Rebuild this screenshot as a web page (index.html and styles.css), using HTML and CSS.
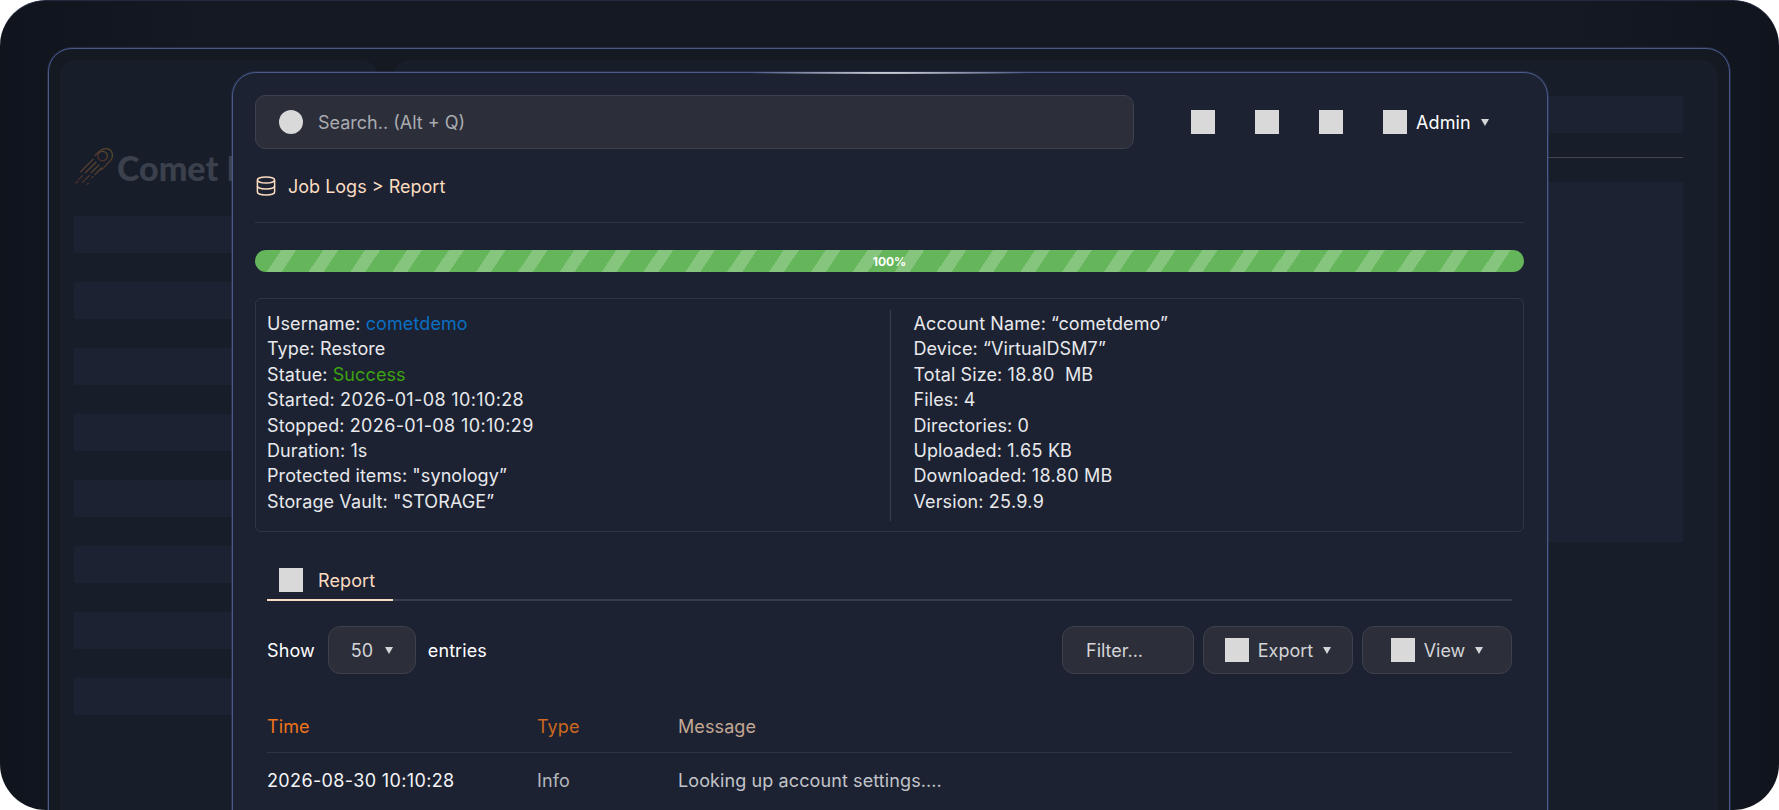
FILE: index.html
```html
<!DOCTYPE html>
<html lang="en">
<head>
<meta charset="utf-8">
<title>Job Logs - Report</title>
<link rel="stylesheet" href="styles.css">
</head>
<body>
<div class="stage">
  <div class="frame">
    <div class="app">
      <aside class="side">
        <div class="brand">
          <svg class="brand-mark" viewBox="0 0 42 42" fill="none" stroke-linecap="round" aria-hidden="true">
            <defs>
              <linearGradient id="cometGrad" x1="1" y1="0" x2="0" y2="1">
                <stop offset="0" stop-color="#5b4d2e"/>
                <stop offset="1" stop-color="#4f2c2b"/>
              </linearGradient>
            </defs>
            <g stroke="url(#cometGrad)" stroke-width="1.3">
              <path d="M22 9 L28 3.500 C31 1 36 1 38.500 3.500 C41 6 41 11 38.500 14 L29 24"/>
              <circle cx="30" cy="9.500" r="5"/>
              <path d="M20 13 L7 26 M23 16 L12 27 M9 30 L5 34 M26 19 L18 27 M16 30 L12 34 M29 22 L22 29 M20 31 L19 32 M2 38 L4 36 M9 37 L11 35 M14 39 L15 38"/>
            </g>
          </svg>
          <span class="brand-name">Comet B</span>
        </div>
        <div class="side-list">
          <div class="side-bar"></div>
          <div class="side-bar"></div>
          <div class="side-bar"></div>
          <div class="side-bar"></div>
          <div class="side-bar"></div>
          <div class="side-bar"></div>
          <div class="side-bar"></div>
          <div class="side-bar"></div>
        </div>
      </aside>
      <main class="back">
        <div class="back-top"></div>
        <div class="back-rule"></div>
        <div class="back-block"></div>
      </main>
    </div>
  </div>

  <section class="panel">
    <div class="glow"></div>
    <header class="topbar">
      <div class="search">
        <span class="ph-circle"></span>
        <span class="search-text">Search.. (Alt + Q)</span>
      </div>
      <div class="actions">
        <span class="ph"></span>
        <span class="ph"></span>
        <span class="ph"></span>
        <span class="user"><span class="ph"></span><span class="user-name">Admin</span><span class="caret caret-user"></span></span>
      </div>
    </header>

    <div class="crumb">
      <svg class="crumb-icon" viewBox="0 0 20 20" fill="none" stroke="#fbdcc1" stroke-width="1.500" aria-hidden="true">
        <ellipse cx="10" cy="4" rx="8.600" ry="3"/>
        <path d="M1.400 4 V16 C1.400 17.700 5.200 19 10 19 S18.600 17.700 18.600 16 V4"/>
        <path d="M1.400 10 C1.400 11.700 5.200 13 10 13 S18.600 11.700 18.600 10"/>
      </svg>
      <span>Job Logs &gt; Report</span>
    </div>

    <div class="progress"><span class="progress-label">100%</span></div>

    <div class="info">
      <div class="info-col">
        <div>Username: <span class="link">cometdemo</span></div>
        <div>Type: Restore</div>
        <div>Statue: <span class="ok">Success</span></div>
        <div>Started: <span class="num">2026-01-08 10:10:28</span></div>
        <div>Stopped: <span class="num">2026-01-08 10:10:29</span></div>
        <div>Duration: 1s</div>
        <div>Protected items: "synology”</div>
        <div>Storage Vault: "STORAGE”</div>
      </div>
      <div class="info-rule"></div>
      <div class="info-col">
        <div>Account Name: “cometdemo”</div>
        <div>Device: “VirtualDSM7”</div>
        <div>Total Size: <span class="num">18.80</span>&nbsp; MB</div>
        <div>Files: 4</div>
        <div>Directories: 0</div>
        <div>Uploaded: <span class="num">1.65</span> KB</div>
        <div>Downloaded: <span class="num">18.80</span> MB</div>
        <div>Version: <span class="num">25.9.9</span></div>
      </div>
    </div>

    <div class="content">
      <nav class="tabs">
        <div class="tab"><span class="ph ph-tab"></span><span>Report</span></div>
      </nav>

      <div class="controls">
        <div class="entries">
          <span>Show</span>
          <div class="btn btn-select"><span>50</span><span class="caret"></span></div>
          <span>entries</span>
        </div>
        <div class="tools">
          <div class="btn btn-filter">Filter...</div>
          <div class="btn btn-tool"><span class="ph ph-btn"></span><span>Export</span><span class="caret"></span></div>
          <div class="btn btn-tool"><span class="ph ph-btn"></span><span>View</span><span class="caret"></span></div>
        </div>
      </div>

      <div class="table">
        <div class="row row-head">
          <span class="c-time">Time</span>
          <span class="c-type">Type</span>
          <span class="c-msg">Message</span>
        </div>
        <div class="row row-body">
          <span class="c-time num">2026-08-30 10:10:28</span>
          <span class="c-type">Info</span>
          <span class="c-msg">Looking up account settings....</span>
        </div>
      </div>
    </div>
  </section>
</div>
</body>
</html>
```
FILE: styles.css
```css
* { box-sizing: border-box; }
html, body { margin: 0; padding: 0; background: #fff; }
body { font-family: "Inter", "Liberation Sans", sans-serif; font-size: 18px; letter-spacing: .1px; color: #e4e5e8; }

.stage {
  position: relative;
  width: 1779px;
  height: 810px;
  overflow: hidden;
  border-radius: 46px;
  border-top: 1px solid #232a40;
  padding: 47px 49px 0 48px;
  background: linear-gradient(90deg, #10141d 0, #151923 12%, #151923 88%, #10141d 100%);
}

.frame {
  height: 800px;
  border: 1px solid #4a5a8a;
  box-shadow: 0 0 0 1px rgba(74, 90, 138, .3);
  border-radius: 24px;
  padding: 11px;
  background: #151922;
}
.app { display: flex; gap: 15px; height: 100%; }
.side, .back { background: #181d2a; border-radius: 17px; }
.side { width: 318px; padding: 0 14px; }
.back { flex: 1; padding: 36px 35px 0 0; }

.brand { display: flex; align-items: center; gap: 3px; height: 44px; margin-top: 85px; }
.brand-mark { width: 40px; height: 42px; flex: none; }
.brand-name { font-family: "Lato", sans-serif; font-weight: 900; font-size: 34px; letter-spacing: 0; color: #3b404d; white-space: nowrap; }
.side-list { display: flex; flex-direction: column; gap: 29px; margin-top: 27px; }
.side-bar { height: 37px; background: #1d2233; }

.back-top { height: 37px; background: #1d2233; }
.back-rule { height: 1px; margin-top: 24px; background: #43464f; }
.back-block { height: 360px; margin-top: 24px; background: #1d2233; }

.panel {
  position: absolute;
  left: 232px;
  top: 71px;
  width: 1316px;
  height: 800px;
  padding: 22px 23px 0 22px;
  border: 1px solid #4a5a8a;
  box-shadow: 0 0 0 1px rgba(74, 90, 138, .3);
  border-radius: 24px;
  background: #1c2232;
}
.glow {
  position: absolute;
  left: 512px;
  top: -1px;
  width: 287px;
  height: 2px;
  background: radial-gradient(ellipse 50% 100% at center, #fff 0, rgba(255,255,255,.55) 35%, rgba(255,255,255,0) 100%);
}

.topbar { display: flex; align-items: center; height: 54px; }
.search {
  display: flex;
  align-items: center;
  gap: 15px;
  width: 879px;
  height: 54px;
  padding: 0 23px;
  background: #2c2e3a;
  border: 1px solid #3e414c;
  border-radius: 10px;
}
.search-text { color: #a9abb1; letter-spacing: 0; }
.ph { display: block; flex: none; width: 24px; height: 24px; background: #d9d9d9; }
.ph-circle { display: block; flex: none; width: 24px; height: 24px; border-radius: 50%; background: #d9d9d9; }
.actions { display: flex; align-items: center; gap: 40px; margin-left: 57px; }
.user { display: flex; align-items: center; gap: 9px; color: #fff; }
.caret {
  display: block;
  flex: none;
  width: 0;
  height: 0;
  border-left: 4px solid transparent;
  border-right: 4px solid transparent;
  border-top: 7px solid #d4d5d8;
}
.caret-user { margin-left: 1px; }

.crumb {
  display: flex;
  align-items: center;
  gap: 12px;
  height: 74px;
  padding-top: 1px;
  border-bottom: 1px solid #2f3545;
  color: #fbdcc1;
  letter-spacing: 0;
}
.crumb-icon { width: 20px; height: 20px; margin-left: 1px; }

.progress {
  display: flex;
  align-items: center;
  justify-content: center;
  height: 22px;
  margin-top: 27px;
  border-radius: 11px;
  background-color: #65b65a;
  background-image: repeating-linear-gradient(124deg, transparent 0, transparent 21.900px, rgba(255,255,255,.21) 21.900px, rgba(255,255,255,.21) 34.400px, transparent 34.400px, transparent 34.710px);
}
.progress-label { font-size: 12px; font-weight: 700; letter-spacing: 0; color: #fff; }

.info {
  display: flex;
  height: 234px;
  margin-top: 26px;
  padding: 12px 11px 10px;
  border: 1px solid #2f3545;
  border-radius: 6px;
  line-height: 25.400px;
  color: #e8e9ec;
}
.info-col { flex: 1; }
.info-col:first-child { flex: none; width: 622.500px; }
.info-rule { width: 1px; margin-right: 23px; margin-top: -1px; background: #3a3f4d; flex: none; }
.link { color: #0a6fc2; }
.ok { color: #3da30f; }
.num { letter-spacing: .36px; }

.content { padding: 0 12px; }
.tabs { height: 69px; display: flex; align-items: flex-end; border-bottom: 2px solid #363b49; }
.tab {
  display: flex;
  align-items: center;
  gap: 15px;
  width: 126px;
  height: 40px;
  margin-bottom: -2px;
  padding: 0 0 0 12px;
  border-bottom: 2px solid #fbdcc1;
  color: #fbdcc1;
}

.controls { display: flex; justify-content: space-between; align-items: center; margin-top: 25px; }
.entries { display: flex; align-items: center; gap: 12px; color: #fff; }
.btn-select { margin-left: 1px; }
.tools { display: flex; gap: 9px; }
.btn {
  display: flex;
  align-items: center;
  height: 48px;
  background: #2c2e3a;
  border: 1px solid #3e414c;
  border-radius: 12px;
  color: #d4d5d8;
  letter-spacing: 0;
}
.btn-select { width: 88px; padding-left: 22px; gap: 12px; }
.btn-filter { width: 132px; padding-left: 23px; }
.btn-tool { width: 150px; justify-content: center; gap: 9px; }
.btn-tool .caret { margin-left: 1px; }

.table { margin-top: 29px; }
.row { display: flex; align-items: center; }
.row-head { height: 50px; padding-bottom: 2px; border-bottom: 1px solid #2f3545; }
.row-body { height: 55px; }
.c-time { width: 270px; }
.c-type { width: 141px; }
.row-head .c-time { color: #ee741a; }
.row-head .c-type { color: #cc681d; }
.row-head .c-msg { color: #c4a895; }
.row-body .c-time { color: #f4f4f6; }
.row-body .c-type { color: #b5b7bd; }
.row-body .c-msg { color: #c2c4c9; }
```
